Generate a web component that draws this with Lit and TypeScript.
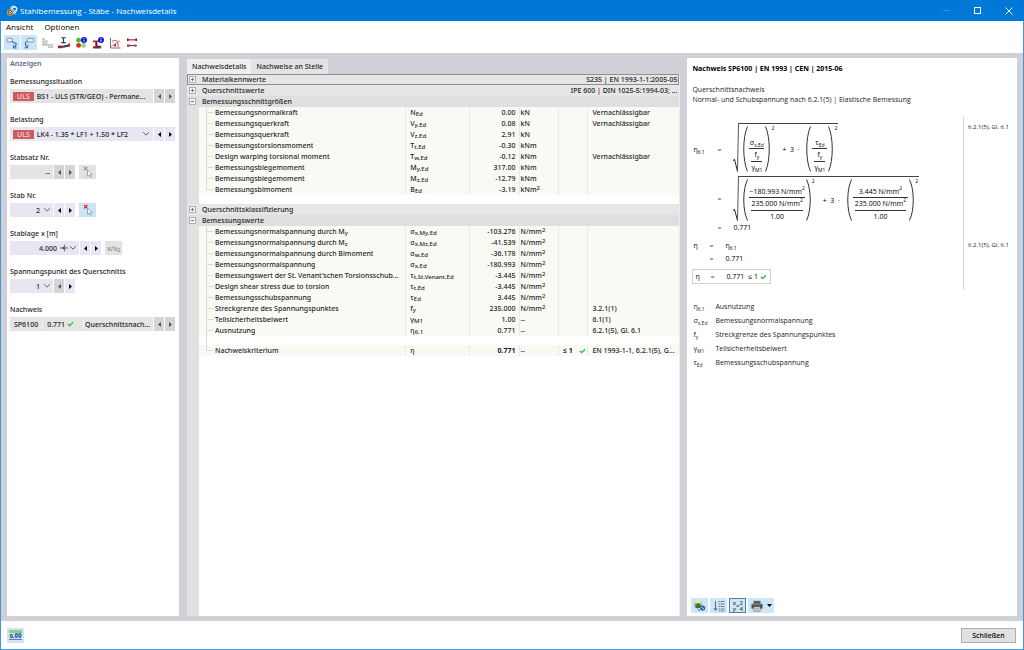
import { LitElement, html, css, svg, nothing, TemplateResult } from "lit";
import { customElement, property, state } from "lit/decorators.js";
import { classMap } from "lit/directives/class-map.js";

type Sym = [string, string?];

interface Row {
  name: Sym;
  sym: Sym;
  value: string;
  unit: string;
  squared?: boolean;
  limit?: string;
  ok?: boolean;
  note?: string;
  strong?: boolean;
  gapBefore?: boolean;
}

interface Group {
  title: string;
  info?: string;
  rows?: Row[];
  focused?: boolean;
  gapBefore?: boolean;
}

const GROUPS: Group[] = [
  { title: "Materialkennwerte", info: "S235 | EN 1993-1-1:2005-05", focused: true },
  { title: "Querschnittswerte", info: "IPE 600 | DIN 1025-5:1994-03; ..." },
  {
    title: "Bemessungsschnittgrößen",
    rows: [
      { name: ["Bemessungsnormalkraft"], sym: ["N", "Ed"], value: "0.00", unit: "kN", note: "Vernachlässigbar" },
      { name: ["Bemessungsquerkraft"], sym: ["V", "y,Ed"], value: "0.08", unit: "kN", note: "Vernachlässigbar" },
      { name: ["Bemessungsquerkraft"], sym: ["V", "z,Ed"], value: "2.91", unit: "kN" },
      { name: ["Bemessungstorsionsmoment"], sym: ["T", "t,Ed"], value: "-0.30", unit: "kNm" },
      { name: ["Design warping torsional moment"], sym: ["T", "w,Ed"], value: "-0.12", unit: "kNm", note: "Vernachlässigbar" },
      { name: ["Bemessungsbiegemoment"], sym: ["M", "y,Ed"], value: "317.00", unit: "kNm" },
      { name: ["Bemessungsbiegemoment"], sym: ["M", "z,Ed"], value: "-12.79", unit: "kNm" },
      { name: ["Bemessungsbimoment"], sym: ["B", "Ed"], value: "-3.19", unit: "kNm", squared: true },
    ],
  },
  { title: "Querschnittsklassifizierung", gapBefore: true },
  {
    title: "Bemessungswerte",
    rows: [
      { name: ["Bemessungsnormalspannung durch M", "y"], sym: ["σ", "x,My,Ed"], value: "-103.276", unit: "N/mm", squared: true },
      { name: ["Bemessungsnormalspannung durch M", "z"], sym: ["σ", "x,Mz,Ed"], value: "-41.539", unit: "N/mm", squared: true },
      { name: ["Bemessungsnormalspannung durch Bimoment"], sym: ["σ", "w,Ed"], value: "-36.178", unit: "N/mm", squared: true },
      { name: ["Bemessungsnormalspannung"], sym: ["σ", "x,Ed"], value: "-180.993", unit: "N/mm", squared: true },
      { name: ["Bemessungswert der St. Venant'schen Torsionsschub..."], sym: ["τ", "t,St.Venant,Ed"], value: "-3.445", unit: "N/mm", squared: true },
      { name: ["Design shear stress due to torsion"], sym: ["τ", "t,Ed"], value: "-3.445", unit: "N/mm", squared: true },
      { name: ["Bemessungsschubspannung"], sym: ["τ", "Ed"], value: "3.445", unit: "N/mm", squared: true },
      { name: ["Streckgrenze des Spannungspunktes"], sym: ["f", "y"], value: "235.000", unit: "N/mm", squared: true, note: "3.2.1(1)" },
      { name: ["Teilsicherheitsbeiwert"], sym: ["γ", "M1"], value: "1.00", unit: "--", note: "6.1(1)" },
      { name: ["Ausnutzung"], sym: ["η", "6.1"], value: "0.771", unit: "--", note: "6.2.1(5), Gl. 6.1" },
      { name: ["Nachweiskriterium"], sym: ["η"], value: "0.771", unit: "--", limit: "≤ 1", ok: true, note: "EN 1993-1-1, 6.2.1(5), G...", strong: true, gapBefore: true },
    ],
  },
];

const LEGEND: [Sym, string][] = [
  [["η", "6,1"], "Ausnutzung"],
  [["σ", "x,Ed"], "Bemessungsnormalspannung"],
  [["f", "y"], "Streckgrenze des Spannungspunktes"],
  [["γ", "M1"], "Teilsicherheitsbeiwert"],
  [["τ", "Ed"], "Bemessungsschubspannung"],
];

const symbol = ([base, sub]: Sym) => html`${base}${sub ? html`<sub>${sub}</sub>` : nothing}`;

const icon = (body: TemplateResult, size = 12) =>
  html`<svg viewBox="0 0 12 12" width=${size} height=${size} aria-hidden="true">${body}</svg>`;

const check = html`<svg class="check" viewBox="0 0 8 7" width="7" height="6" aria-hidden="true">
  <path d="M1 3.6 3 5.400 7 1.6" fill="none" stroke="#2fbf3c" stroke-width="1.6" />
</svg>`;

const chevron = html`<svg class="chevron" viewBox="0 0 8 6" width="8" height="6" aria-hidden="true">
  <path d="M1.2 1.2 4 4.2 6.8 1.2" fill="none" stroke="#555" stroke-width="0.9" />
</svg>`;

const infoBadge = svg`<circle cx="9" cy="3" r="3" fill="#1717e0"/><path d="M9 2.7v2" stroke="#fff" stroke-width=".9"/><circle cx="9" cy="1.5" r=".5" fill="#fff"/>`;

const ICONS = {
  app: svg`<path d="M5 2 8 1l3 2-1 4-4 2z" fill="#23406a"/><path d="M6 3.200 9.500 1.800l1.400 2.600-3 2.200z" fill="#9fb0c8"/><circle cx="4.200" cy="7.600" r="3.300" fill="#d9a52c"/><circle cx="4.200" cy="7.600" r="2.300" fill="#253858"/><path d="M3 7.600 4.300 6l1.200 1.800-1.300 1.300z" fill="#f1d27a"/><path d="m7.500 7 2.300 2.600" stroke="#dfe6ef" stroke-width=".9"/>`,
  down: svg`<rect x="1" y="1.300" width="5.200" height="3.600" rx=".6" fill="#e4f1fb" stroke="#7d8c9c" stroke-width=".9"/><path d="M5.800 4.600 10 6.400C10.600 8.200 9.500 9.600 7.600 10.800" fill="none" stroke="#3d68a8" stroke-width="1.100"/><path d="M7.400 7.600v3.400h3.200" fill="none" stroke="#3d68a8" stroke-width=".9"/>`,
  up: svg`<rect x="4.200" y="1.300" width="6.600" height="3.800" rx=".6" fill="#e4f1fb" stroke="#7d8c9c" stroke-width=".9"/><path d="M4.200 4.300C1.600 5.200 1.600 8 4.400 10.600" fill="none" stroke="#3d68a8" stroke-width="1.100"/><path d="M1.600 10.800h3.200V7.600" fill="none" stroke="#3d68a8" stroke-width=".9"/>`,
  steps: svg`<path d="M1 1h3v2h2.600v4H12v4H7V9H1z" fill="#c9c9c9"/><path d="M1 3.500h5M1 6h6M1 9h10" stroke="#e8e8e8" stroke-width=".6"/>`,
  beam: svg`<path d="M3.200.8h4.600M3.200 5.600h4.600M5.500.8v4.800" stroke="#26336b" stroke-width="1.100"/><path d="M0 9v2.200h3.500L5 10V9z" fill="#c22"/><path d="M4.500 9.800 12 7v2.200L4.500 11z" fill="#24459c"/><path d="M0 9.200h5L12 7.600" stroke="#222" stroke-width=".9" fill="none"/><path d="M10 6.800 12 6.200v3.200l-2 .4z" fill="#c22"/>`,
  traffic: svg`<circle cx="3.600" cy="3.200" r="2.400" fill="#41bf2d"/><circle cx="3.600" cy="8.400" r="2.400" fill="#e02b2b"/><circle cx="8.600" cy="8.400" r="2.400" fill="#8fd97f"/>${infoBadge}`,
  profile: svg`<path d="M1 3.500h6v1.600H5.200v4H8V11H1V9.200h2.200v-4H1z" fill="#cc1f2a"/><path d="M4.800 5v4l4 .4V11H1.500" fill="none" stroke="#22235e" stroke-width=".9"/>${infoBadge}`,
  chart: svg`<path d="M1.500.5v10.500h10" fill="none" stroke="#666" stroke-width=".9"/><path d="M1.500 10 11 3.500" stroke="#6f86b8" stroke-width=".8"/><path d="M3 4.500c3-2.500 6-1 6 2.500v3" fill="none" stroke="#d94a3a" stroke-width="1"/><path d="M5 9.500V7.500l2-1v3z" fill="#d92626"/>`,
  forces: svg`<path d="M1.500 2.800h9" stroke="#e8404a" stroke-width="1.500"/><path d="M1 1.600h1.600v2.400H1zM9.400 1.600H11v2.400H9.400z" fill="#24316e"/><path d="M1 8.600h10" stroke="#24316e" stroke-width="1"/><path d="M1 7.400h3v2.400H1zM8.800 7l2.600 1.600-2.600 1.600z" fill="#e02c36"/>`,
  image: svg`<path d="M.5 1h7v6h-7z" fill="#7fb94e"/><path d="M.5 1h7v2.200h-7z" fill="#dfe7b6"/><path d="M1.500 5.500 4 3l3.500 3v2h-6z" fill="#4b6b35"/><circle cx="8.600" cy="8" r="2.600" fill="#31639e"/><path d="M7 7.200 10 9" stroke="#a9d0f0" stroke-width=".9"/><path d="m3 8.500 3 2.500" stroke="#666" stroke-width="1"/>`,
  list: svg`<path d="M2.500 1v9M.8 8.200l1.700 2.200 1.700-2.200" fill="none" stroke="#4d5966" stroke-width=".9"/><path d="M5.500 1.500h6M5.500 4h6M5.500 6.500h6M5.500 9h6M5.500 11h6" stroke="#6b7680" stroke-width=".9" stroke-dasharray="1.500 .5 4"/>`,
  printer: svg`<path d="M2.500.8h7v3h-7z" fill="#5a5f66"/><path d="M.5 3.800h11v4.800h-11z" fill="#4a4f56"/><path d="M2.800 6.800h6.400v4.400H2.800z" fill="#e8edf2" stroke="#555" stroke-width=".6"/><path d="M4 8.400h4M4 9.800h4" stroke="#666" stroke-width=".5"/><path d="M1.500 4.700h9" stroke="#9aa" stroke-width=".6"/>`,
  pick: svg`<path d="m2 1 3.400 3.400M5.400 1 2 4.400" class="cross" stroke-width="1.100"/><path d="M5.500 4v6.200L7 8.900l1 2.300 1.300-.5-1-2.200h2z" fill="#fff" stroke="#888" stroke-width=".7"/>`,
  align: svg`<path d="M0 6h12M7 1v10" stroke="#555" stroke-width="1.300"/><path d="M2.500 6l4-3v6z" fill="#555"/>`,
};

@customElement("step-buttons")
export class StepButtons extends LitElement {
  static styles = css`
    :host { display: flex; gap: 1px; }
    button {
      width: 10px; padding: 0; border: 0;
      background: #e7e7f3;
      display: grid; place-items: center;
    }
    button:disabled { background: #d5d5d5; }
    svg { fill: #000; display: block; }
    button:disabled svg { fill: #555; }
  `;
  @property({ type: Boolean }) prevOff = false;
  @property({ type: Boolean }) nextOff = false;

  render() {
    return html`
      <button ?disabled=${this.prevOff} aria-label="Zurück"><svg width="3" height="5" viewBox="0 0 3 5"><path d="M3 0v5L0 2.500z" /></svg></button>
      <button ?disabled=${this.nextOff} aria-label="Weiter"><svg width="3" height="5" viewBox="0 0 3 5"><path d="M0 0v5l3-2.500z" /></svg></button>
    `;
  }
}

@customElement("filter-panel")
export class FilterPanel extends LitElement {
  static styles = css`
    :host { display: block; background: #fff; padding: 1px 4px 4px 3px; }
    h2 { margin: 0 0 8px; font-size: 7px; font-weight: 600; line-height: 10px; color: #56698c; }
    .group { margin-bottom: 12px; }
    label { display: block; line-height: 10px; height: 12px; }
    .line { display: flex; gap: 1px; height: 14px; }
    .field { display: flex; align-items: center; background: #e7e7f3; min-width: 0; }
    .grow { flex: 1; }
    .short { width: 43px; }
    .medium { width: 69px; }
    .off { background: #e4e4e4; }
    .field select, .field input {
      flex: 1; min-width: 0; width: 100%; height: 14px; padding: 0; border: 0;
      font: inherit; color: #1d1d1d; background: transparent; opacity: 1;
      appearance: none; text-overflow: ellipsis;
    }
    .right select, .right input { text-align: right; text-align-last: right; padding-right: 3px; }
    .badge { background: #cd5c5c; color: #f7dede; margin: 0 3px; padding: 0 4px; line-height: 9px; }
    .chevron { margin-right: 3px; flex: none; pointer-events: none; }
    .short .chevron, .medium .chevron { margin-right: 2px; }
    .medium .chevron { margin-left: 1px; }
    .part { padding: 0 4px; border-right: 1px solid #f3f3f3; display: flex; align-items: center; gap: 2px; }
    .wide { padding-right: 9px; margin-right: 1px; }
    .tool { width: 17px; margin-left: 3px; padding: 0; border: 0; background: #cbe5f8; display: grid; place-items: center; font: inherit; color: #888; }
    .tool:disabled { background: #e2e2e2; }
    .tool .cross { stroke: #e01c1c; }
    .tool:disabled .cross { stroke: #999; }
    sub { font-size: 5px; line-height: 0; vertical-align: -1px; }
  `;

  render() {
    return html`
      <h2>Anzeigen</h2>
      <div class="group">
        <label for="situation">Bemessungssituation</label>
        <div class="line">
          <div class="field grow off">
            <span class="badge">ULS</span>
            <select id="situation" disabled><option>BS1 - ULS (STR/GEO) - Permane...</option></select>
          </div>
          <step-buttons prevOff nextOff></step-buttons>
        </div>
      </div>
      <div class="group">
        <label for="load">Belastung</label>
        <div class="line">
          <div class="field grow">
            <span class="badge">ULS</span>
            <select id="load"><option>LK4 - 1.35 * LF1 + 1.50 * LF2</option></select>
            ${chevron}
          </div>
          <step-buttons></step-buttons>
        </div>
      </div>
      <div class="group">
        <label for="set">Stabsatz Nr.</label>
        <div class="line">
          <div class="field short off right"><input id="set" value="--" disabled /></div>
          <step-buttons prevOff nextOff></step-buttons>
          <button class="tool" disabled aria-label="Stabsatz wählen">${icon(ICONS.pick)}</button>
        </div>
      </div>
      <div class="group">
        <label for="member">Stab Nr.</label>
        <div class="line">
          <div class="field short right"><select id="member"><option>2</option></select>${chevron}</div>
          <step-buttons></step-buttons>
          <button class="tool" aria-label="Stab wählen">${icon(ICONS.pick)}</button>
        </div>
      </div>
      <div class="group">
        <label for="location">Stablage x [m]</label>
        <div class="line">
          <div class="field medium right"><select id="location"><option>4.000</option></select>${icon(ICONS.align, 8)}${chevron}</div>
          <step-buttons></step-buttons>
          <button class="tool" disabled><span>x/x<sub>0</sub></span></button>
        </div>
      </div>
      <div class="group">
        <label for="point">Spannungspunkt des Querschnitts</label>
        <div class="line">
          <div class="field short right"><select id="point"><option>1</option></select>${chevron}</div>
          <step-buttons prevOff></step-buttons>
        </div>
      </div>
      <div class="group">
        <label for="check">Nachweis</label>
        <div class="line">
          <div class="field grow off">
            <span class="part">SP6100</span>
            <span class="part wide">0.771 ${check}</span>
            <select id="check" disabled><option>Querschnittsnach...</option></select>
          </div>
          <step-buttons prevOff nextOff></step-buttons>
        </div>
      </div>
    `;
  }
}

@customElement("detail-table")
export class DetailTable extends LitElement {
  static styles = css`
    :host { display: flex; flex-direction: column; min-width: 0; }
    .tabs { display: flex; padding-top: 1px; }
    .tab { height: 15px; padding: 0 5px; border: 0; font: inherit; color: #1d1d1d; background: #e3e3e5; }
    .tab.current { background: #efefef; }
    .body { flex: 1; background: linear-gradient(90deg, #e1e1e1 12px, #fff 12px); border-right: 1px solid #ececee; }
    table { width: 100%; border-collapse: collapse; table-layout: fixed; }
    .c-gutter { width: 12px; }
    .c-name { width: 42%; }
    .c-sym { width: 13%; }
    .c-value { width: 10%; }
    .c-unit { width: 8%; }
    .c-limit { width: 6%; }
    td, th { height: 11px; line-height: 11px; padding: 0; font-weight: inherit; text-align: left; white-space: nowrap; overflow: hidden; }
    .row td { background: #fafaf5; }
    .row td + td + td { border-left: 1px solid #e9e9e6; padding-left: 4px; }
    .row .gutter, .gap .gutter { background: #e1e1e1; }
    .row .value { text-align: right; padding-right: 3px; }
    .row td.unit { padding-left: 1px; }
    .gap td { height: 9px; line-height: 9px; background: #fff; }
    .head th { background: #e6e6e6; }
    .head.open th { background: #dfdfdf; }
    .head.focused { outline: 1px solid #8f8f8f; outline-offset: -1px; }
    .title { display: flex; justify-content: space-between; padding: 0 2px 0 3px; }
    .toggle { display: block; width: 7px; height: 7px; margin-left: 2px; padding: 0; border: 0; background: none; }
    .toggle svg { display: block; }
    .leaf { display: flex; }
    .twig { flex: none; width: 8px; margin: 0 0 0 7px; height: 11px; border-left: 1px solid #dcdcd8; background: linear-gradient(#dcdcd8, #dcdcd8) 0 5px / 7px 1px no-repeat; }
    .twig.last { height: 6px; }
    .twig.plain { background: none; height: 9px; }
    .leaf span:last-child { overflow: hidden; text-overflow: ellipsis; }
    .limit { display: flex; align-items: center; justify-content: space-between; padding-right: 1px; }
    .strong { font-weight: 700; }
    sub, sup { font-size: 6px; line-height: 0; }
    sub { vertical-align: -1px; }
    sup { vertical-align: 2px; }
  `;

  @state() private closed = new Set<number>();

  private toggle(i: number) {
    const next = new Set(this.closed);
    next.has(i) ? next.delete(i) : next.add(i);
    this.closed = next;
  }

  private row(r: Row, last: boolean) {
    return html`
      ${r.gapBefore
        ? html`<tr class="gap"><td class="gutter"></td><td><div class="twig plain"></div></td><td colspan="5"></td></tr>`
        : nothing}
      <tr class="row">
        <td class="gutter"></td>
        <td><div class="leaf"><span class=${classMap({ twig: true, last })}></span><span>${symbol(r.name)}</span></div></td>
        <td>${symbol(r.sym)}</td>
        <td class=${classMap({ value: true, strong: !!r.strong })}>${r.value}</td>
        <td class="unit">${r.unit}${r.squared ? html`<sup>2</sup>` : nothing}</td>
        <td>${r.limit ? html`<div class="limit"><span class="strong">${r.limit}</span>${r.ok ? check : nothing}</div>` : nothing}</td>
        <td>${r.note ?? nothing}</td>
      </tr>
    `;
  }

  private group(g: Group, i: number) {
    const open = !!g.rows && !this.closed.has(i);
    const rows = g.rows ?? [];
    return html`
      ${g.gapBefore ? html`<tr class="gap"><td class="gutter"></td><td colspan="6"></td></tr>` : nothing}
      <tr class=${classMap({ head: true, open, focused: !!g.focused })}>
        <th>
          <button class="toggle" aria-expanded=${open} aria-label=${g.title} @click=${() => this.toggle(i)}>
            <svg width="7" height="7" viewBox="0 0 7 7">
              <rect x=".5" y=".5" width="6" height="6" fill="#f4f4f4" stroke="#b0b0b0" />
              <path d=${open ? "M2 3.500h3" : "M2 3.500h3M3.500 2v3"} stroke="#777" />
            </svg>
          </button>
        </th>
        <th colspan="6"><div class="title"><span>${g.title}</span><span>${g.info ?? nothing}</span></div></th>
      </tr>
      ${open ? rows.map((r, k) => this.row(r, k === rows.length - 1)) : nothing}
    `;
  }

  render() {
    return html`
      <div class="tabs" role="tablist">
        <button class="tab current" role="tab" aria-selected="true">Nachweisdetails</button>
        <button class="tab" role="tab" aria-selected="false">Nachweise an Stelle</button>
      </div>
      <div class="body">
        <table>
          <colgroup>
            <col class="c-gutter" /><col class="c-name" /><col class="c-sym" /><col class="c-value" />
            <col class="c-unit" /><col class="c-limit" /><col />
          </colgroup>
          <tbody>${GROUPS.map((g, i) => this.group(g, i))}</tbody>
        </table>
      </div>
    `;
  }
}

@customElement("formula-panel")
export class FormulaPanel extends LitElement {
  static styles = css`
    :host { display: flex; flex-direction: column; background: #fff; padding: 5px 4px 3px; min-width: 0; font-family: "Open Sans", "Noto Sans", sans-serif; }
    h2 { margin: 0 0 10px 1px; font-size: 7px; line-height: 12px; font-weight: 700; color: #000; }
    .intro { margin: 0 0 12px 1px; line-height: 10px; font-weight: 400; }
    .math { display: grid; grid-template-columns: 1fr 49px; }
    .lines { border-right: 1px solid #d4d4d4; padding: 6px 0; min-width: 0; }
    .refs { padding: 5px 0 0 4px; display: grid; grid-template-rows: 118px auto; font-size: 6px; line-height: 10px; white-space: nowrap; }
    .eq { display: flex; align-items: center; color: #000; }
    .lhs { width: 26px; padding-left: 2px; box-sizing: border-box; }
    .sign { width: 16px; color: #555; }
    .narrow .lhs { width: 18px; }
    .eq.result { height: 13px; }
    .eq.gap { margin-top: 5px; }
    .root { display: flex; }
    .root > svg { display: block; width: 6px; flex: none; }
    .radicand { display: flex; align-items: center; border-top: 1px solid #444; padding: 2px 0 0 4px; }
    .tall { height: 49px; margin-bottom: 4px; }
    .mid { height: 45px; }
    .power { display: flex; align-self: stretch; }
    .power svg { display: block; width: 5px; height: 100%; flex: none; }
    .power sup { width: 5px; text-align: center; font-size: 5px; line-height: 5px; vertical-align: top; }
    .frac { display: grid; grid-template-rows: 1fr 1px 1fr; text-align: center; padding: 0 1px; line-height: 11px; }
    .frac > :first-child { align-self: end; }
    .bar { background: #333; }
    .sub { display: grid; grid-template-rows: 12px 1px 10px; padding: 0 2px; }
    .plus { padding: 0 7px; white-space: pre; }
    .box { display: flex; align-items: center; width: max-content; height: 13px; margin: 4px 0 0 1px; padding-right: 3px; border: 1px solid #cfcfcf; color: #000; }
    .box .lhs { width: 17px; }
    .box .value { padding-right: 4px; }
    dl { display: grid; grid-template-columns: 22px 1fr; grid-auto-rows: 14px; align-items: center; margin: 9px 0 0 2px; font-weight: 400; }
    dd, dt { margin: 0; }
    .tools { display: flex; gap: 2px; margin-top: auto; }
    .tools button { width: 17px; height: 15px; padding: 0; border: 0; background: #cfe6f7; display: flex; align-items: center; justify-content: center; gap: 4px; font: inherit; }
    .tools .pressed { border: 1px solid #4a7fae; }
    .tools .print { width: 26px; }
    .ratio { font-size: 6px; line-height: 6px; color: #3c4854; font-weight: 600; display: grid; grid-template-columns: auto auto auto; align-items: center; text-align: center; }
    .ratio b { display: grid; grid-template-rows: 6px 6px; font-weight: 600; }
    sub { font-size: 5px; line-height: 0; vertical-align: -2px; }
    .sq { font-size: 5px; line-height: 0; vertical-align: 3px; }
    .check { margin-left: 2px; }
  `;

  private paren(right = false) {
    return html`<svg viewBox="0 0 5 40" preserveAspectRatio="none" aria-hidden="true">
      <path d=${right ? "M.5.500C5.500 10 5.500 30 .5 39.500" : "M4.500.500C-.5 10-.5 30 4.500 39.500"} fill="none" stroke="#333" vector-effect="non-scaling-stroke" />
    </svg>`;
  }

  private power(num: unknown, den: unknown, factor: unknown) {
    return html`<span class="power">
      ${this.paren()}
      <span class="frac">
        <span>${num}</span><span class="bar"></span>
        <span class="sub"><span>${den}</span><span class="bar"></span><span>${factor}</span></span>
      </span>
      ${this.paren(true)}<sup>2</sup>
    </span>`;
  }

  private root(size: string, a: unknown, b: unknown) {
    return html`<span class="root ${size}">
      <svg viewBox="0 0 6 50" height="100%" preserveAspectRatio="none" aria-hidden="true">
        <path d="M0 38.500 1.500 37 4.500 49.500" fill="none" stroke="#222" vector-effect="non-scaling-stroke" />
        <path d="M4.500 49.500 5.500 0" fill="none" stroke="#555" vector-effect="non-scaling-stroke" />
      </svg>
      <span class="radicand">${a}<span class="plus">+  3  ·</span>${b}</span>
    </span>`;
  }

  render() {
    const stress = (v: string) => html`${v} N/mm<sup class="sq">2</sup>`;
    const fy = symbol(["f", "y"]);
    const gamma = symbol(["γ", "M1"]);
    return html`
      <h2>Nachweis SP6100 | EN 1993 | CEN | 2015-06</h2>
      <p class="intro">Querschnittsnachweis<br />Normal- und Schubspannung nach 6.2.1(5) | Elastische Bemessung</p>
      <div class="math">
        <div class="lines">
          <div class="eq">
            <span class="lhs">${symbol(["η", "6.1"])}</span><span class="sign">=</span>
            ${this.root("tall", this.power(symbol(["σ", "x,Ed"]), fy, gamma), this.power(symbol(["τ", "Ed"]), fy, gamma))}
          </div>
          <div class="eq">
            <span class="lhs"></span><span class="sign">=</span>
            ${this.root("mid", this.power(stress("−180.993"), stress("235.000"), "1.00"), this.power(stress("3.445"), stress("235.000"), "1.00"))}
          </div>
          <div class="eq result"><span class="lhs"></span><span class="sign">=</span><span>0.771</span></div>
          <div class="eq result narrow gap"><span class="lhs">η</span><span class="sign">=</span><span>${symbol(["η", "6.1"])}</span></div>
          <div class="eq result narrow"><span class="lhs"></span><span class="sign">=</span><span>0.771</span></div>
          <div class="box"><span class="lhs">η</span><span class="sign">=</span><span class="value">0.771</span><span>≤ 1</span>${check}</div>
        </div>
        <div class="refs"><span>6.2.1(5), Gl. 6.1</span><span>6.2.1(5), Gl. 6.1</span></div>
      </div>
      <dl>${LEGEND.map(([s, text]) => html`<dt>${symbol(s)}</dt><dd>${text}</dd>`)}</dl>
      <div class="tools">
        <button aria-label="Bild">${icon(ICONS.image)}</button>
        <button aria-label="Liste">${icon(ICONS.list)}</button>
        <button class="pressed" aria-label="Werte einsetzen">
          <span class="ratio"><b><span>x</span><span>y</span></b><span>=</span><b><span>2</span><span>4</span></b></span>
        </button>
        <button class="print" aria-label="Drucken">
          ${icon(ICONS.printer)}<svg width="5" height="3" viewBox="0 0 5 3"><path d="M0 0h5L2.500 3z" /></svg>
        </button>
      </div>
    `;
  }
}

@customElement("app-root")
export class AppRoot extends LitElement {
  static styles = css`
    :host {
      display: flex; flex-direction: column; box-sizing: border-box; min-height: 100vh;
      border: solid #3f97dc; border-width: 0 1px 1px; background: #fff; color: #1d1d1d;
      font: 500 7px "Noto Sans", "Open Sans", sans-serif;
    }
    .titlebar { display: flex; align-items: center; height: 21px; margin: 0 -1px; padding-left: 6px; background: #0078d7; color: #fff; }
    .titlebar h1 { flex: 1; margin: 0 0 0 2px; font: 400 8px "Open Sans", sans-serif; }
    .titlebar button { width: 31px; height: 21px; padding: 0; border: 0; background: none; display: grid; place-items: center; }
    .titlebar path, .titlebar .win { fill: none; stroke: #fff; }
    .titlebar button:disabled path { stroke: #3a94de; }
    .menu { display: flex; align-items: flex-start; gap: 11px; height: 14px; padding: 0 5px; }
    .menu button { padding: 0; border: 0; background: none; font: 400 8px "Open Sans", sans-serif; line-height: 12px; color: #000; }
    .toolbar { display: flex; height: 15px; padding: 0 3px; }
    .toolbar button { width: 17px; padding: 0; border: 0; background: none; display: grid; place-items: center; }
    .toolbar button.on { width: 16px; margin-right: 1px; background: #cbe5f9; }
    .content { flex: 1; display: grid; grid-template-columns: 172px 3fr 2fr; gap: 7px; margin-top: 3px; padding: 5px 6px; background: #d1d0d6; }
    .content > :nth-child(2) { margin-left: 1px; }
    .footer { display: flex; align-items: center; justify-content: space-between; height: 28px; padding: 0 7px 0 6px; }
    .digits { width: 17px; height: 15px; padding: 0; border: 0; background: #cfe6f7; font: 700 6px "Open Sans", sans-serif; line-height: 6px; color: #333; }
    .digits span { display: block; margin: 0 2px; border-top: 3px solid #8ad07a; border-bottom: 1px solid #4d7fc4; }
    .digits b { color: #2d5cae; }
    .close { width: 55px; height: 15px; padding: 0; border: 1px solid #adadad; background: #e1e1e1; font: inherit; color: #000; }
    svg { display: block; }
  `;

  render() {
    const tools = ["steps", "beam", "traffic", "profile", "chart", "forces"] as const;
    return html`
      <header class="titlebar">
        ${icon(ICONS.app)}
        <h1>Stahlbemessung - Stäbe - Nachweisdetails</h1>
        <button disabled aria-label="Minimieren"><svg width="7" height="7"><path d="M0 3.500h7" /></svg></button>
        <button aria-label="Maximieren"><svg width="7" height="7"><rect class="win" x=".5" y=".5" width="6" height="6" /></svg></button>
        <button aria-label="Fenster schließen"><svg width="8" height="8"><path d="m.5.500 7 7M7.500.500l-7 7" /></svg></button>
      </header>
      <nav class="menu"><button>Ansicht</button><button>Optionen</button></nav>
      <div class="toolbar">
        <button class="on" aria-label="Eingang">${icon(ICONS.down)}</button>
        <button class="on" aria-label="Ausgang">${icon(ICONS.up)}</button>
        ${tools.map((t) => html`<button aria-label=${t}>${icon(ICONS[t])}</button>`)}
      </div>
      <main class="content">
        <filter-panel></filter-panel>
        <detail-table></detail-table>
        <formula-panel></formula-panel>
      </main>
      <footer class="footer">
        <button class="digits"><span>0,<b>00</b></span></button>
        <button class="close">Schließen</button>
      </footer>
    `;
  }
}
